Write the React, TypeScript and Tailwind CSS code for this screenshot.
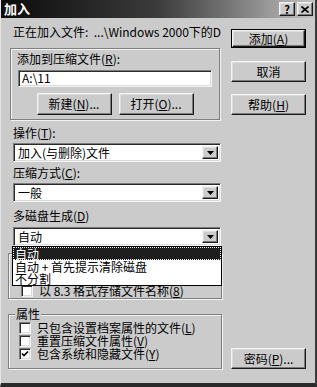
import React from "react";

const raised =
  "border border-t-[#f4f4f4] border-l-[#f4f4f4] border-r-[#1a1a1a] border-b-[#1a1a1a] shadow-[inset_-1px_-1px_0_#7c7c7c,inset_1px_1px_0_#dcdcdc]";
const sunken =
  "border border-t-[#7c7c7c] border-l-[#7c7c7c] border-r-[#f4f4f4] border-b-[#f4f4f4] shadow-[inset_1px_1px_0_#2a2a2a,inset_-1px_-1px_0_#dcdcdc]";
const etched =
  "border border-[#808080] shadow-[inset_1px_1px_0_#f2f2f2,1px_1px_0_#f2f2f2]";

const Btn = ({
  children,
  isDefault,
  className = "",
}: {
  children: React.ReactNode;
  isDefault?: boolean;
  className?: string;
}) => (
  <div className={`${isDefault ? "border border-black" : ""} ${className}`}>
    <div className={`flex h-full items-center justify-center bg-[#cbcbcb] ${raised}`}>
      {children}
    </div>
  </div>
);

const Arrow = () => (
  <div className={`flex h-full w-[16px] items-center justify-center bg-[#cbcbcb] ${raised}`}>
    <svg width="7" height="4" viewBox="0 0 7 4">
      <path d="M0 0h7L3.5 4z" fill="#000" />
    </svg>
  </div>
);

const Combo = ({ value }: { value: string }) => (
  <div className={`flex h-[19px] items-stretch bg-white p-[2px] ${sunken}`}>
    <div className="flex-1 pl-[2px] leading-[14px]">{value}</div>
    <Arrow />
  </div>
);

const Check = ({ checked }: { checked?: boolean }) => (
  <div className={`flex h-[12px] w-[12px] shrink-0 items-center justify-center bg-white ${sunken}`}>
    {checked && (
      <svg width="8" height="8" viewBox="0 0 8 8">
        <path d="M1 3.5l2 2L7 1.5" stroke="#000" strokeWidth="1.6" fill="none" />
      </svg>
    )}
  </div>
);

const App = () => {
  return (
    <div className="h-[387px] w-[317px] overflow-hidden bg-[#cbcbcb] font-['Noto_Sans_CJK_SC',sans-serif] text-[12px] leading-[14px] text-black">
      <div className="flex h-[387px] flex-col border-l border-r-2 border-b-[4px] border-l-[#e6e6e6] border-r-[#3a3a3a] border-b-[#2a2a2a]">
        {/* Title bar */}
        <div className="flex h-[21px] items-center bg-linear-to-r from-[#0c0c0c] via-[#3c3c3c] to-[#c4c4c4] pl-[3px] pr-[2px]">
          <span className="flex-1 text-[13px] font-bold text-white">加入</span>
          <div className={`mr-[2px] flex h-[14px] w-[16px] items-center justify-center bg-[#cbcbcb] text-[11px] font-bold leading-[12px] ${raised}`}>
            ?
          </div>
          <div className={`flex h-[14px] w-[16px] items-center justify-center bg-[#cbcbcb] ${raised}`}>
            <svg width="8" height="7" viewBox="0 0 8 7">
              <path d="M0.5 0.5l7 6M7.5 0.5l-7 6" stroke="#000" strokeWidth="1.6" />
            </svg>
          </div>
        </div>

        <div className="flex flex-1 pl-[7px] pb-[14px]">
          {/* Left column */}
          <div className="flex w-[214px] flex-col">
            <div className="mt-[7px] whitespace-nowrap pl-[5px]">
              正在加入文件:&nbsp;&nbsp;...\Windows 2000下的D
            </div>

            <div className={`ml-[2px] mt-[9px] flex h-[72px] w-[210px] flex-col ${etched}`}>
              <div className="mt-[3px] pl-[6px]">
                添加到压缩文件(<u>R</u>):
              </div>
              <div className={`ml-[7px] mt-[4px] h-[17px] w-[194px] bg-white pl-[3px] leading-[13px] ${sunken}`}>
                A:\11
              </div>
              <div className="mt-[6px] flex justify-center gap-[7px]">
                <Btn className="h-[22px] w-[75px]">
                  新建(<u>N</u>)...
                </Btn>
                <Btn className="h-[22px] w-[75px]">
                  打开(<u>O</u>)...
                </Btn>
              </div>
            </div>

            <div className="mt-[6px] pl-[5px]">
              操作(<u>T</u>):
            </div>
            <div className="ml-[5px] mt-[3px] w-[208px]">
              <Combo value="加入(与删除)文件" />
            </div>

            <div className="mt-[4px] pl-[5px]">
              压缩方式(<u>C</u>):
            </div>
            <div className="ml-[5px] mt-[3px] w-[208px]">
              <Combo value="一般" />
            </div>

            <div className="mt-[7px] pl-[5px]">
              多磁盘生成(<u>D</u>)
            </div>
            <div className="relative z-10 ml-[5px] mt-[4px] w-[208px]">
              <Combo value="自动" />
              <div className="absolute left-[-1px] top-[19px] w-[210px] border border-black bg-white">
                <div className="h-[13px] border border-dotted border-[#f0f0f0] bg-[#1e1e1e] pl-[1px] leading-[11px] text-white">
                  自动
                </div>
                <div className="h-[13px] pl-[2px] leading-[13px]">自动 + 首先提示清除磁盘</div>
                <div className="h-[12px] pl-[2px] leading-[12px]">不分割</div>
              </div>
            </div>

            <div className={`mt-[7px] flex h-[46px] w-[214px] items-end pb-[1px] pl-[12px] ${etched}`}>
              <div className="flex h-[13px] items-center gap-[6px] leading-[13px]">
                <Check />
                <span>以 8.3 格式存储文件名称(<u>8</u>)</span>
              </div>
            </div>

            <div className={`relative mt-[15px] flex h-[55px] w-[214px] flex-col pt-[6px] pl-[10px] ${etched}`}>
              <span className="absolute left-[6px] top-[-8px] bg-[#cbcbcb] px-[1px]">属性</span>
              {[
                ["只包含设置档案属性的文件(", "L", ")"],
                ["重置压缩文件属性(", "V", ")"],
                ["包含系统和隐藏文件(", "Y", ")"],
              ].map(([a, k, b], i) => (
                <div key={i} className="flex h-[13px] items-center gap-[6px] leading-[13px]">
                  <Check checked={i === 2} />
                  <span className="leading-[13px]">
                    {a}
                    <u>{k}</u>
                    {b}
                  </span>
                </div>
              ))}
            </div>
          </div>

          {/* Right column */}
          <div className="ml-[9px] flex w-[75px] flex-col">
            <Btn isDefault className="mt-[11px] h-[19px]">
              添加(<u>A</u>)
            </Btn>
            <Btn className="mt-[13px] h-[21px]">取消</Btn>
            <Btn className="mt-[12px] h-[21px]">
              帮助(<u>H</u>)
            </Btn>
            <Btn className="mt-auto h-[21px]">
              密码(<u>P</u>)...
            </Btn>
          </div>
        </div>
      </div>
    </div>
  );
};

export default App;
